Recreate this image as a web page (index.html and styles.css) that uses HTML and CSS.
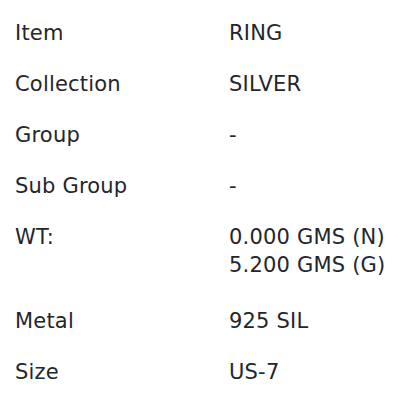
FILE: index.html
```html
<!DOCTYPE html>
<html>
<head>
<meta charset="utf-8">
<link rel="stylesheet" href="styles.css">
</head>
<body>
<div class="details">
  <div class="row"><div class="label">Item</div><div class="value">RING</div></div>
  <div class="row"><div class="label">Collection</div><div class="value">SILVER</div></div>
  <div class="row"><div class="label">Group</div><div class="value">-</div></div>
  <div class="row"><div class="label">Sub Group</div><div class="value">-</div></div>
  <div class="row multi"><div class="label">WT:</div><div class="value"><div>0.000 GMS (N)</div><div>5.200 GMS (G)</div></div></div>
  <div class="row"><div class="label">Metal</div><div class="value">925 SIL</div></div>
  <div class="row"><div class="label">Size</div><div class="value">US-7</div></div>
</div>
</body>
</html>
```
FILE: styles.css
```css
html, body {
  margin: 0;
  padding: 0;
  background: #fff;
}
body {
  font-family: "DejaVu Sans", "Open Sans", sans-serif;
  font-size: 21px;
  letter-spacing: 0.2px;
  color: #24262b;
}
.details {
  padding: 8px 15px 0 15px;
}
.row {
  display: grid;
  grid-template-columns: 214px 1fr;
  padding: 12px 0;
  line-height: 27px;
}
.row.multi {
  padding-bottom: 17px;
}
.value div + div {
  margin-top: 1px;
}
```
